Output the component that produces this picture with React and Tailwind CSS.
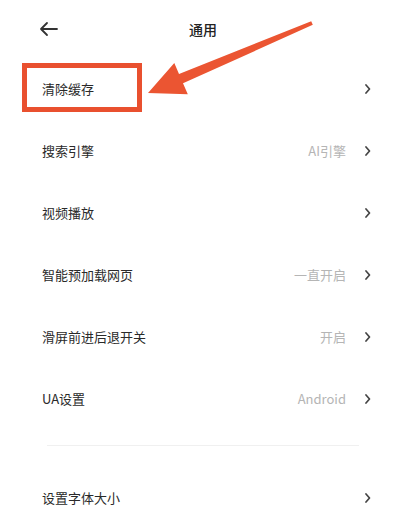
import React from 'react';

const rows = [
  { label: '清除缓存' },
  { label: '搜索引擎', value: 'AI引擎' },
  { label: '视频播放' },
  { label: '智能预加载网页', value: '一直开启' },
  { label: '滑屏前进后退开关', value: '开启' },
  { label: 'UA设置', value: 'Android' },
];

const Chevron = () => (
  <svg width="6" height="10" viewBox="0 0 6 10" className="shrink-0">
    <path d="M1 1l3.5 4L1 9" fill="none" stroke="#444" strokeWidth="1.7" strokeLinecap="round" strokeLinejoin="round" />
  </svg>
);

const Row = ({ label, value }) => (
  <div className="flex h-[62px] items-center pl-[42px] pr-[35px]">
    <span className="flex-1 text-[13px] text-[#2a2a2a]">{label}</span>
    {value && <span className="mr-[19px] text-[13px] text-[#b5b5b5]">{value}</span>}
    <Chevron />
  </div>
);

export default function App() {
  return (
    <div
      className="relative h-[519px] w-[406px] overflow-hidden bg-white"
      style={{ fontFamily: '"Noto Sans CJK SC", "Noto Sans", sans-serif' }}
    >
      <div className="relative flex h-[58px] items-center justify-center">
        <svg width="20" height="16" viewBox="0 0 20 16" className="absolute left-[39px] top-[21px]">
          <path d="M18 8H2M8 2L2 8l6 6" fill="none" stroke="#333" strokeWidth="1.8" strokeLinecap="round" strokeLinejoin="round" />
        </svg>
        <span className="text-[14px] font-medium text-[#222]">通用</span>
      </div>

      {rows.map((r) => (
        <Row key={r.label} {...r} />
      ))}

      <div className="mx-[47px] mt-[15px] mb-[21px] h-px bg-[#f0f0f0]" />

      <Row label="设置字体大小" />

      {/* annotation */}
      <div className="pointer-events-none absolute left-[22px] top-[63px] h-[49px] w-[120px] border-[5px] border-[#e9502f]" />
      <svg className="pointer-events-none absolute left-0 top-0" width="406" height="519">
        <polygon
          points="312.8,24.8 183,83.3 187.8,94.3 148,93 174.3,63.1 179,74.1 311.2,21.2"
          fill="#eb5532"
        />
      </svg>
    </div>
  );
}
